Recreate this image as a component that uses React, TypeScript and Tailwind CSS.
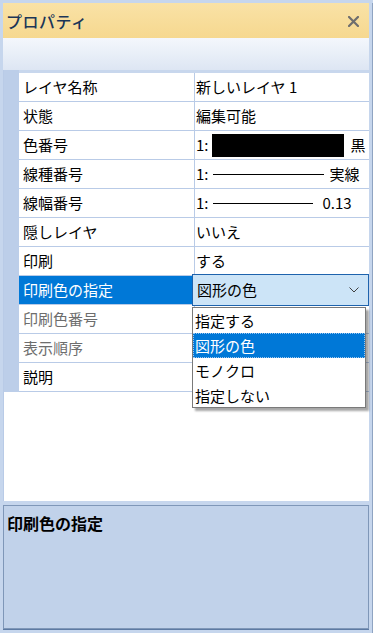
import React from "react";

const FONT = { fontFamily: '"Noto Sans CJK JP", "Noto Sans", sans-serif' };

type Row = { name: string; value?: React.ReactNode; gray?: boolean; selected?: boolean };

function ColorValue() {
  return (
    <div className="flex items-center h-full">
      <span>1:</span>
      <div className="ml-[3px] w-[132px] h-[23px] bg-black" />
      <span className="ml-[7px]">黒</span>
    </div>
  );
}

function LineValue({ w, label, gap }: { w: number; label: string; gap: string }) {
  return (
    <div className="flex items-center h-full">
      <span>1:</span>
      <div className="ml-[4px] h-[1px] bg-black" style={{ width: w }} />
      <span className={gap}>{label}</span>
    </div>
  );
}

export default function App() {
  const rows: Row[] = [
    { name: "レイヤ名称", value: "新しいレイヤ 1" },
    { name: "状態", value: "編集可能" },
    { name: "色番号", value: <ColorValue /> },
    { name: "線種番号", value: <LineValue w={111} label="実線" gap="ml-[6px]" /> },
    { name: "線幅番号", value: <LineValue w={100} label="0.13" gap="ml-[10px]" /> },
    { name: "隠しレイヤ", value: "いいえ" },
    { name: "印刷", value: "する" },
    { name: "印刷色の指定", selected: true },
    { name: "印刷色番号", gray: true },
    { name: "表示順序", gray: true },
    { name: "説明" },
  ];
  const items = ["指定する", "図形の色", "モノクロ", "指定しない"];

  return (
    <div
      className="w-[373px] h-[633px] bg-[#c6d6ed] pl-[3px] pr-[1px] pt-[3px] flex flex-col text-[15px] text-black overflow-hidden"
      style={FONT}
    >
      <div className="flex flex-col flex-1 border-r-[3px] border-[#c6d6ed] shadow-[1px_0_0_#8fa4c2]">
        {/* title bar */}
        <div className="h-[35px] bg-gradient-to-b from-[#f9e2a6] to-[#f6d88f] flex items-center justify-between pl-[3px] pr-[10px]">
          <span className="text-[16px] font-medium text-[#1b3658] tracking-[0.5px]">プロパティ</span>
          <svg width="11" height="11" viewBox="0 0 11 11" className="mt-[1px]">
            <path d="M1 1 L10 10 M10 1 L1 10" stroke="#6e6e6e" strokeWidth="2.2" strokeLinecap="square" />
          </svg>
        </div>
        {/* toolbar */}
        <div className="h-[32px] bg-gradient-to-b from-[#f4f7fc] to-[#dde6f3]" />
        {/* grid */}
        <div className="relative bg-white h-[431px] flex flex-col border-l border-[#b9cbe7]">
          <div className="h-[3px] bg-[#c8d7ed] flex">
            <div className="w-[15px] bg-[#bccee9]" />
          </div>
          {rows.map((r, i) => (
            <div key={i} className="flex h-[29px]">
              <div className="w-[15px] bg-[#bccee9]" />
              <div className="flex flex-1 border-b border-[#b9cbe7]">
                <div
                  className={`w-[176px] border-r border-[#b9cbe7] pl-[4px] leading-[28px] ${
                    r.selected ? "bg-[#0078d7] text-white" : r.gray ? "text-[#6d6d6d]" : ""
                  }`}
                >
                  {r.name}
                </div>
                <div className="flex-1 pl-[1px] leading-[28px] relative">
                  {r.selected ? (
                    <div className="absolute left-[-3px] right-0 top-[-2px] bottom-[-2px] border border-[#1e63ad] bg-[#cce4f7] flex items-center justify-between pl-[4px] pr-[9px]">
                      <span>図形の色</span>
                      <svg width="10" height="6" viewBox="0 0 10 6">
                        <path d="M0.5 0.5 L5 5 L9.5 0.5" fill="none" stroke="#404040" strokeWidth="1" />
                      </svg>
                    </div>
                  ) : (
                    r.value
                  )}
                </div>
              </div>
            </div>
          ))}
          {/* dropdown list */}
          <div className="absolute left-[188px] top-[237px] w-[174px] h-[101px] bg-white border border-[#7a7a7a] shadow-[3px_3px_2px_rgba(0,0,0,0.35)] flex flex-col">
            {items.map((it, i) => (
              <div
                key={i}
                className={`h-[25px] leading-[25px] pl-[2px] ${
                  i === 1 ? "bg-[#0078d7] text-white outline outline-1 outline-dotted outline-[#9cc6ee] -outline-offset-1" : ""
                }`}
              >
                {it}
              </div>
            ))}
          </div>
        </div>
        {/* splitter */}
        <div className="h-[4px] bg-[#c6d6ed]" />
        {/* description */}
        <div className="h-[124px] border border-[#7f97b8] bg-[#c1d2ea] pl-[3px] pt-[5px]">
          <span className="font-bold text-[16px] text-black">印刷色の指定</span>
        </div>
        <div className="h-[1px] bg-[#5d7aa3]" />
        <div className="flex-1 bg-[#c6d6ed]" />
      </div>
    </div>
  );
}
